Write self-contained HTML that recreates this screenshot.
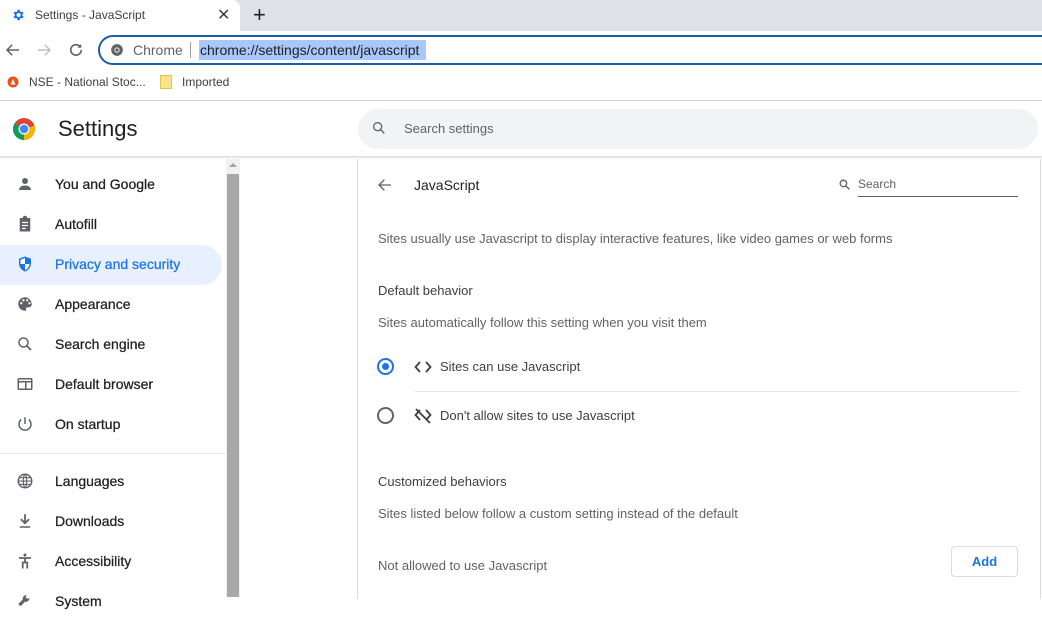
<!DOCTYPE html>
<html><head><meta charset="utf-8"><style>
*{margin:0;padding:0;box-sizing:border-box}
body{width:1042px;height:597px;overflow:hidden;background:#fff;font-family:"Liberation Sans",Arial,sans-serif;color:#202124;position:relative}
.abs{position:absolute}
.tabbar{left:0;top:0;width:1042px;height:31px;background:#dee1e6}
.tab{left:0;top:0;width:240px;height:31px;background:#fff;border-radius:0 8px 0 0}
.nav{left:0;top:31px;width:1042px;height:37px;background:#fff}
.omni{left:98px;top:35px;width:960px;height:30px;border:2px solid #1a5ea8;border-radius:15px;background:#fff}
.si{position:absolute;left:0;width:222px;height:40px;font-size:14px;color:#202124;font-weight:normal;-webkit-text-stroke:0.25px #202124}
.si span{position:absolute;left:55px;top:12px}
.si svg{position:absolute;left:16px;top:11px}
.t13{font-size:13px;color:#5f6368}
</style></head><body>
<div class="abs tabbar"></div>
<div class="abs tab"></div>
<svg class="abs" style="left:11px;top:8px" width="14" height="14" viewBox="0 0 24 24"><path fill="#1a73e8" d="M19.4 13a7.5 7.5 0 000-2l2.1-1.6-2-3.5-2.5 1a7 7 0 00-1.7-1L15 3h-4l-.4 2.9a7 7 0 00-1.7 1l-2.5-1-2 3.5L6.6 11a7.5 7.5 0 000 2l-2.1 1.6 2 3.5 2.5-1a7 7 0 001.7 1L11 21h4l.4-2.9a7 7 0 001.7-1l2.5 1 2-3.5zM13 15.5a3.5 3.5 0 110-7 3.5 3.5 0 010 7z"/></svg>
<div class="abs" style="left:35px;top:8px;font-size:12px;color:#3c4043">Settings - JavaScript</div>
<div class="abs" style="left:217px;top:5px;font-size:16px;color:#3c4043">✕</div>
<div class="abs" style="left:253px;top:2px;font-size:22px;color:#202124">+</div>
<div class="abs nav"></div>
<svg class="abs" style="left:4px;top:41px" width="18" height="18" viewBox="0 0 24 24"><path d="M20 12H5M11 5l-7 7 7 7" stroke="#5f6368" stroke-width="2" fill="none"/></svg>
<svg class="abs" style="left:35px;top:41px" width="18" height="18" viewBox="0 0 24 24"><path d="M4 12h15M13 5l7 7-7 7" stroke="#bdc1c6" stroke-width="2" fill="none"/></svg>
<svg class="abs" style="left:67px;top:41px" width="18" height="18" viewBox="0 0 24 24"><path d="M19 12a7 7 0 11-2-5" stroke="#5f6368" stroke-width="2.2" fill="none"/><path d="M19 4v5h-5z" fill="#5f6368"/></svg>
<div class="abs omni"></div>
<svg class="abs" style="left:110px;top:43px" width="14" height="14" viewBox="0 0 24 24"><circle cx="12" cy="12" r="10" fill="#5f6368"/><circle cx="12" cy="12" r="4.5" fill="#fff"/><circle cx="12" cy="12" r="3" fill="#5f6368"/></svg>
<div class="abs" style="left:133px;top:42px;font-size:14px;color:#5f6368">Chrome</div>
<div class="abs" style="left:190px;top:42px;width:1px;height:16px;background:#9aa0a6"></div>
<div class="abs" style="left:199px;top:40px;height:20px;width:227px;background:#a8c7fa"></div>
<div class="abs" style="left:200px;top:42px;font-size:14px;color:#202124">chrome://settings/content/javascript</div>
<svg class="abs" style="left:7px;top:76px" width="12" height="12" viewBox="0 0 12 12"><circle cx="6" cy="6" r="5.5" fill="#e8501c"/><path d="M3.5 8.5L6 3l2.5 5.5z" fill="#fff"/></svg>
<div class="abs" style="left:29px;top:75px;font-size:12px;color:#3c4043">NSE - National Stoc...</div>
<div class="abs" style="left:160px;top:75px;width:12px;height:14px;background:#fbe38c;border:1px solid #e5c350"></div>
<div class="abs" style="left:182px;top:75px;font-size:12px;color:#3c4043">Imported</div>
<div class="abs" style="left:0;top:100px;width:1042px;height:1px;background:#d0d0d0"></div>
<svg class="abs" style="left:12px;top:117px" width="24" height="24" viewBox="0 0 24 24"><circle cx="12" cy="12" r="11" fill="#db4437"/><path d="M12 12L22.5 8.5A11 11 0 0 1 12 23z" fill="#f4b400"/><path d="M12 12L12 23A11 11 0 0 1 2.5 6.5z" fill="#0f9d58"/><circle cx="12" cy="12" r="5.5" fill="#fff"/><circle cx="12" cy="12" r="4.3" fill="#4285f4"/></svg>
<div class="abs" style="left:58px;top:116px;font-size:22px;color:#202124">Settings</div>
<div class="abs" style="left:358px;top:109px;width:680px;height:40px;background:#f1f3f4;border-radius:20px"></div>
<svg class="abs" style="left:371px;top:120px" width="16" height="16" viewBox="0 0 24 24"><circle cx="10" cy="10" r="6" stroke="#5f6368" stroke-width="2" fill="none"/><path d="M14.5 14.5L20 20" stroke="#5f6368" stroke-width="2.2"/></svg>
<div class="abs" style="left:404px;top:121px;font-size:13px;color:#5f6368">Search settings</div>
<div class="abs" style="left:0;top:156px;width:1042px;height:3px;background:linear-gradient(#d8d8d8,#fff)"></div>
<div class="abs" style="left:0;top:245px;width:222px;height:40px;background:#e8f0fe;border-radius:0 20px 20px 0"></div>
<div class="si" style="top:164px"><svg width="18" height="18" viewBox="0 0 24 24"><circle cx="12" cy="8" r="4" fill="#5f6368"/><path d="M4 20c0-4 4-6 8-6s8 2 8 6z" fill="#5f6368"/></svg><span>You and Google</span></div>
<div class="si" style="top:204px"><svg width="18" height="18" viewBox="0 0 24 24"><path d="M5 4h4a3 3 0 016 0h4v18H5z" fill="#5f6368"/><path d="M8 10h8M8 14h8M8 18h5" stroke="#fff" stroke-width="1.6"/></svg><span>Autofill</span></div>
<div class="si" style="top:244px;color:#1a73e8;-webkit-text-stroke:0.25px #1a73e8"><svg width="18" height="18" viewBox="0 0 24 24"><path d="M12 2l8 3v6c0 5-3.5 9.5-8 11-4.5-1.5-8-6-8-11V5z" fill="#1a73e8"/><path d="M12 4v8H6V6.4zM12 12h6c-.5 4-3 7-6 8.3z" fill="#fff"/></svg><span>Privacy and security</span></div>
<div class="si" style="top:284px"><svg width="18" height="18" viewBox="0 0 24 24"><path d="M12 3a9 9 0 000 18c1.5 0 2-1 1.5-2-.6-1.2.2-2.5 1.5-2.5H17a4 4 0 004-4c0-5-4-9.5-9-9.5z" fill="#5f6368"/><circle cx="7" cy="11" r="1.5" fill="#fff"/><circle cx="10" cy="7" r="1.5" fill="#fff"/><circle cx="15" cy="7" r="1.5" fill="#fff"/><circle cx="18" cy="11" r="1.5" fill="#fff"/></svg><span>Appearance</span></div>
<div class="si" style="top:324px"><svg width="18" height="18" viewBox="0 0 24 24"><circle cx="10" cy="10" r="6" stroke="#5f6368" stroke-width="2" fill="none"/><path d="M14.5 14.5L20 20" stroke="#5f6368" stroke-width="2.4"/></svg><span>Search engine</span></div>
<div class="si" style="top:364px"><svg width="18" height="18" viewBox="0 0 24 24"><rect x="3" y="5" width="18" height="14" rx="1" stroke="#5f6368" stroke-width="2" fill="none"/><path d="M3 9h18M13 9v10" stroke="#5f6368" stroke-width="2"/></svg><span>Default browser</span></div>
<div class="si" style="top:404px"><svg width="18" height="18" viewBox="0 0 24 24"><path d="M12 3v9M7 6a8 8 0 1010 0" stroke="#5f6368" stroke-width="2" fill="none"/></svg><span>On startup</span></div>
<div class="abs" style="left:0;top:453px;width:226px;height:1px;background:#e6e6e6"></div>
<div class="si" style="top:461px"><svg width="18" height="18" viewBox="0 0 24 24"><circle cx="12" cy="12" r="9" stroke="#5f6368" stroke-width="2" fill="none"/><path d="M3 12h18M12 3c-3 3-3 15 0 18M12 3c3 3 3 15 0 18M5 7.5h14M5 16.5h14" stroke="#5f6368" stroke-width="1.5" fill="none"/></svg><span>Languages</span></div>
<div class="si" style="top:501px"><svg width="18" height="18" viewBox="0 0 24 24"><path d="M12 3v11M6.5 9.5L12 15l5.5-5.5" stroke="#5f6368" stroke-width="2.4" fill="none"/><path d="M5 20h14" stroke="#5f6368" stroke-width="2"/></svg><span>Downloads</span></div>
<div class="si" style="top:541px"><svg width="18" height="18" viewBox="0 0 24 24"><circle cx="12" cy="4" r="2" fill="#5f6368"/><path d="M4 8h16M12 8v6M9 22v-8h6v8" stroke="#5f6368" stroke-width="2.4" fill="none"/></svg><span>Accessibility</span></div>
<div class="si" style="top:581px"><svg width="18" height="18" viewBox="0 0 24 24"><path d="M14 4a5 5 0 00-5 6L3 16l3 3 6-6a5 5 0 006-5l-3 1-2-2z" fill="#5f6368"/></svg><span>System</span></div>
<div class="abs" style="left:226px;top:159px;width:14px;height:438px;background:#f1f1f1"></div>
<div class="abs" style="left:227px;top:174px;width:12px;height:423px;background:#a8a8a8"></div>
<div class="abs" style="left:229px;top:163px;width:0;height:0;border-left:4px solid transparent;border-right:4px solid transparent;border-bottom:4px solid #a3a3a3"></div>
<div class="abs" style="left:357px;top:159px;width:684px;height:440px;border-left:1px solid #dadce0;border-right:1px solid #dadce0"></div>
<svg class="abs" style="left:377px;top:177px" width="16" height="16" viewBox="0 0 24 24"><path d="M21 12H4M11 4l-8 8 8 8" stroke="#5f6368" stroke-width="2" fill="none"/></svg>
<div class="abs" style="left:414px;top:177px;font-size:14px;color:#202124">JavaScript</div>
<svg class="abs" style="left:838px;top:178px" width="13" height="13" viewBox="0 0 24 24"><circle cx="10" cy="10" r="6" stroke="#5f6368" stroke-width="2.4" fill="none"/><path d="M14.5 14.5L21 21" stroke="#5f6368" stroke-width="2.6"/></svg>
<div class="abs" style="left:858px;top:177px;font-size:12px;color:#5f6368">Search</div>
<div class="abs" style="left:858px;top:196px;width:160px;height:1px;background:#5f6368"></div>
<div class="abs t13" style="left:378px;top:231px">Sites usually use Javascript to display interactive features, like video games or web forms</div>
<div class="abs t13" style="left:378px;top:283px;color:#3c4043">Default behavior</div>
<div class="abs t13" style="left:378px;top:315px">Sites automatically follow this setting when you visit them</div>
<div class="abs" style="left:377px;top:358px;width:17px;height:17px;border:2px solid #1a73e8;border-radius:50%"></div>
<div class="abs" style="left:382px;top:363px;width:7px;height:7px;background:#1a73e8;border-radius:50%"></div>
<svg class="abs" style="left:414px;top:360px" width="18" height="14" viewBox="0 0 18 14"><path d="M6 2L1.5 7 6 12M12 2l4.5 5L12 12" stroke="#3c4043" stroke-width="1.8" fill="none"/></svg>
<div class="abs t13" style="left:440px;top:359px;color:#3c4043">Sites can use Javascript</div>
<div class="abs" style="left:414px;top:391px;width:606px;height:1px;background:#e8eaed"></div>
<div class="abs" style="left:377px;top:407px;width:17px;height:17px;border:2px solid #5f6368;border-radius:50%"></div>
<svg class="abs" style="left:414px;top:408px" width="18" height="16" viewBox="0 0 18 16"><path d="M6 2L1.5 7 6 12M12 2l4.5 5L12 12M2 1l14 14" stroke="#3c4043" stroke-width="1.8" fill="none"/></svg>
<div class="abs t13" style="left:440px;top:408px;color:#3c4043">Don't allow sites to use Javascript</div>
<div class="abs t13" style="left:378px;top:474px;color:#3c4043">Customized behaviors</div>
<div class="abs t13" style="left:378px;top:506px">Sites listed below follow a custom setting instead of the default</div>
<div class="abs t13" style="left:378px;top:558px">Not allowed to use Javascript</div>
<div class="abs" style="left:951px;top:546px;width:67px;height:31px;border:1px solid #dadce0;border-radius:4px;font-size:13px;color:#1a73e8;text-align:center;line-height:29px;font-weight:bold">Add</div>
</body></html>
